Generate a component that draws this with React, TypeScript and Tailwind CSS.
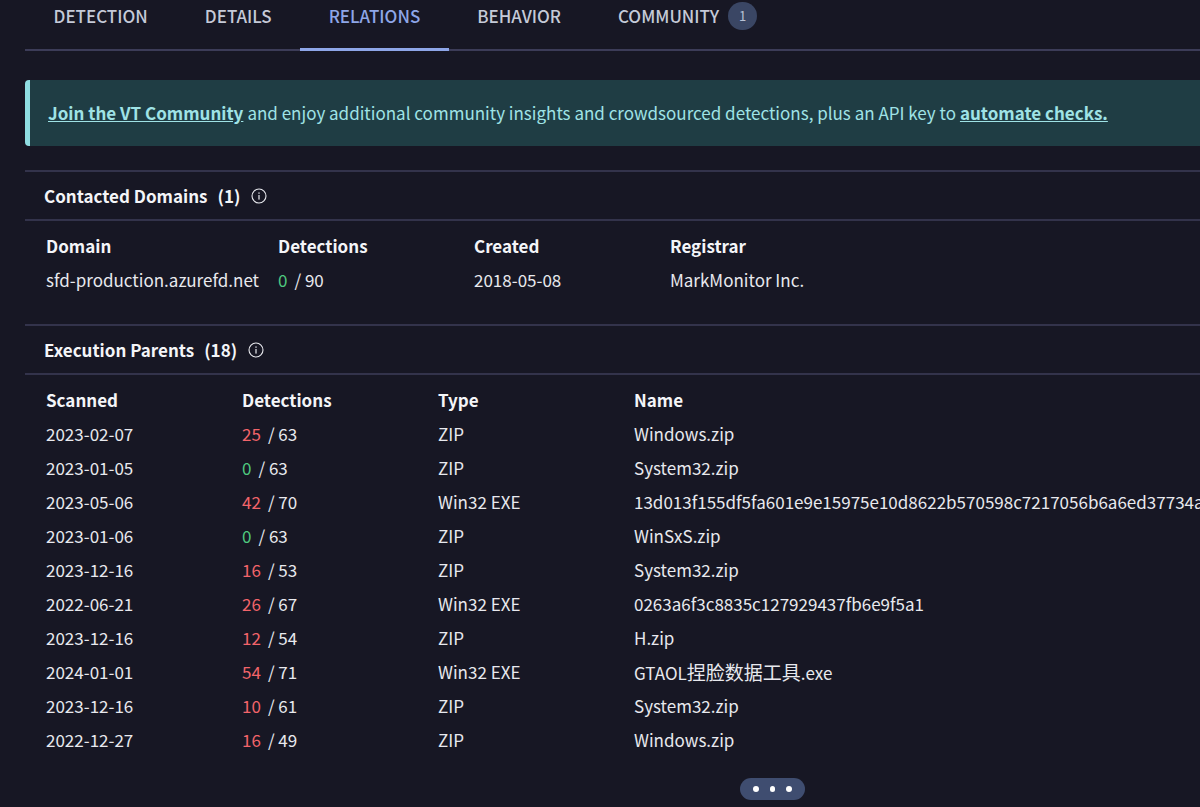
import React from "react";

const font = '"Noto Sans CJK SC", "Noto Sans CJK JP", "Noto Sans", sans-serif';

function Info() {
  return (
    <svg width="16" height="16" viewBox="0 0 16 16" fill="none" className="text-[#e8e9ee] shrink-0">
      <circle cx="8" cy="8" r="7" stroke="currentColor" strokeWidth="1.1" />
      <rect x="7.4" y="7" width="1.2" height="4.6" fill="currentColor" />
      <rect x="7.4" y="4.4" width="1.2" height="1.4" fill="currentColor" />
    </svg>
  );
}

function Det({ n, total }: { n: number; total: number }) {
  return (
    <span>
      <span className={n === 0 ? "text-[#4fc97f]" : "text-[#f2646a]"}>{n}</span>
      <span className="ml-[7px]">/ {total}</span>
    </span>
  );
}

const rows: [string, number, number, string, React.ReactNode][] = [
  ["2023-02-07", 25, 63, "ZIP", "Windows.zip"],
  ["2023-01-05", 0, 63, "ZIP", "System32.zip"],
  ["2023-05-06", 42, 70, "Win32 EXE", "13d013f155df5fa601e9e15975e10d8622b570598c7217056b6a6ed37734a"],
  ["2023-01-06", 0, 63, "ZIP", "WinSxS.zip"],
  ["2023-12-16", 16, 53, "ZIP", "System32.zip"],
  ["2022-06-21", 26, 67, "Win32 EXE", "0263a6f3c8835c127929437fb6e9f5a1"],
  ["2023-12-16", 12, 54, "ZIP", "H.zip"],
  ["2024-01-01", 54, 71, "Win32 EXE", <>GTAOL<span className="text-[19px]">捏脸数据工具</span>.exe</>],
  ["2023-12-16", 10, 61, "ZIP", "System32.zip"],
  ["2022-12-27", 16, 49, "ZIP", "Windows.zip"],
];

const tabs = ["DETECTION", "DETAILS", "RELATIONS", "BEHAVIOR"];

export default function App() {
  return (
    <div
      className="w-[1200px] h-[807px] overflow-hidden bg-[#171724] text-[#e8e9ee] text-[17px] pl-[25px]"
      style={{ fontFamily: font }}
    >
      <div className="flex h-[51px] border-b-2 border-[#3c3c58] items-start">
        {tabs.map((t) => (
          <div
            key={t}
            className={
              "h-[51px] px-[28.5px] pt-[2px] leading-[28px] font-medium border-b-[3px] " +
              (t === "RELATIONS" ? "text-[#8ea6e8] border-[#8ea6e8]" : "text-[#c5cad8] border-transparent")
            }
          >
            {t}
          </div>
        ))}
        <div className="px-[28.5px] pt-[2px] leading-[28px] font-medium flex items-center text-[#c5cad8]">
          COMMUNITY
          <span className="ml-[9px] w-[29px] h-[28px] rounded-full bg-[#3a4664] text-[13px] font-normal flex items-center justify-center text-[#b9c2d6]">
            1
          </span>
        </div>
      </div>

      <div className="mt-[29px] h-[66px] bg-[#1f3d44] border-l-[5px] border-[#8fdde2] rounded-l-[4px] flex items-center pl-[18px] whitespace-nowrap text-[#9fe3e6]">
        <a className="font-bold underline">Join the VT Community</a>
        <span className="ml-[4px]">and enjoy additional community insights and crowdsourced detections, plus an API key to</span>
        <a className="ml-[4px] font-bold underline">automate checks.</a>
      </div>

      <div className="mt-[24px] border-t-2 border-[#33334b]">
        <div className="h-[47px] flex items-center pl-[19px] font-bold text-[#f4f5f8]">
          Contacted Domains
          <span className="ml-[10px]">(1)</span>
          <span className="ml-[11px]"><Info /></span>
        </div>
      </div>
      <div className="border-t-2 border-[#33334b] pt-[8px] pl-[21px] h-[105px]">
        <div className="grid grid-cols-[232px_196px_196px_1fr] h-[34px] items-center font-bold text-[#f4f5f8]">
          <div>Domain</div>
          <div>Detections</div>
          <div>Created</div>
          <div>Registrar</div>
        </div>
        <div className="grid grid-cols-[232px_196px_196px_1fr] h-[34px] items-center">
          <div>sfd-production.azurefd.net</div>
          <div><Det n={0} total={90} /></div>
          <div>2018-05-08</div>
          <div>MarkMonitor Inc.</div>
        </div>
      </div>

      <div className="border-t-2 border-[#33334b]">
        <div className="h-[47px] flex items-center pl-[19px] font-bold text-[#f4f5f8]">
          Execution Parents
          <span className="ml-[10px]">(18)</span>
          <span className="ml-[11px]"><Info /></span>
        </div>
      </div>
      <div className="border-t-2 border-[#33334b] pt-[8px] pl-[21px]">
        <div className="grid grid-cols-[196px_196px_196px_1fr] h-[34px] items-center font-bold text-[#f4f5f8]">
          <div>Scanned</div>
          <div>Detections</div>
          <div>Type</div>
          <div>Name</div>
        </div>
        {rows.map((r, i) => (
          <div key={i} className="grid grid-cols-[196px_196px_196px_1fr] h-[34px] items-center whitespace-nowrap">
            <div>{r[0]}</div>
            <div><Det n={r[1]} total={r[2]} /></div>
            <div>{r[3]}</div>
            <div>{r[4]}</div>
          </div>
        ))}
      </div>

      <div className="mt-[21px] ml-[715px] w-[65px] h-[22px] rounded-full bg-[#3f4d70] flex items-center justify-center gap-[11px]">
        <span className="w-[5.5px] h-[5.5px] rounded-full bg-white" />
        <span className="w-[5.5px] h-[5.5px] rounded-full bg-white" />
        <span className="w-[5.5px] h-[5.5px] rounded-full bg-white" />
      </div>
    </div>
  );
}
